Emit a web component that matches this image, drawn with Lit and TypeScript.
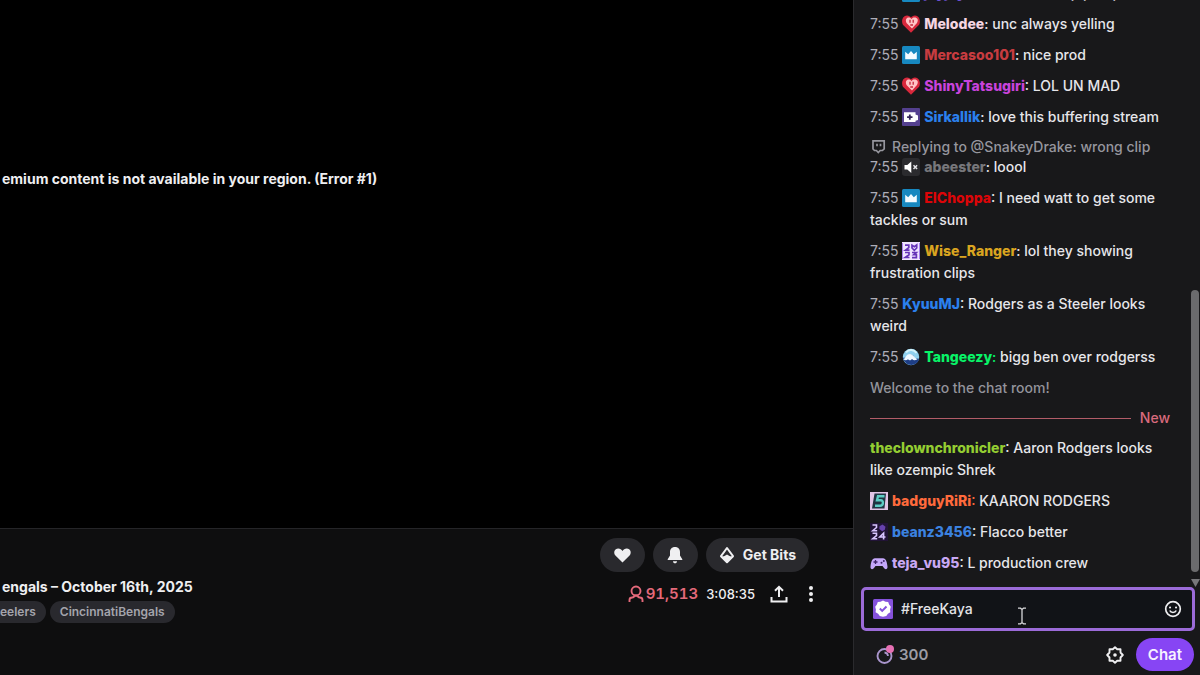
import { LitElement, html, svg, css, nothing, TemplateResult } from "lit";
import { customElement, property } from "lit/decorators.js";

type BadgeName = "heart" | "crown" | "pack" | "muted" | "recap23" | "wave" | "five" | "recap24" | "pad";

interface Message {
  time?: string;
  badge?: BadgeName;
  user: string;
  color: string;
  text: string;
  tint?: boolean;
}

const badges: Record<BadgeName, TemplateResult> = {
  heart: svg`<path d="M9 17.800.900 9.800C-1 6 .6.8 5 .6c2 0 3.200 1 4 2 .8-1 2-2 4-2 4.400.2 6 5.400 4.100 9.200Z" fill="#d8283c"/>
    <path d="M10 13.500 4.500 8C3 5 4.500 2.600 6.600 2.600c1.400 0 2.300.7 2.900 1.600.6-.9 1.500-1.600 2.900-1.600C15.500 2.600 16.800 5 15 8Z" fill="#ffc4c6"/>
    <path d="M8 4.800v3M11.200 4.800v3M8.300 10h2.700" stroke="#c5283c" stroke-width="1.300" fill="none"/>`,
  crown: svg`<rect width="18" height="18" rx="1.500" fill="#1788c0"/>
    <path d="M3.200 5.800 6.200 8.300 9 5l2.800 3.300 3-2.500v7.400H3.200Z" fill="#f4fbff"/>`,
  pack: svg`<rect width="18" height="18" rx="1" fill="#54408f"/>
    <path d="M2 4.200h11.500v2.300l2.500 1v4.400l-2.500.8V14H2Z" fill="#fff"/>
    <path d="M7.800 6.400v5.400M5.100 9.100h5.400" stroke="#322459" stroke-width="1.800"/>`,
  muted: svg`<rect width="18" height="18" rx="3" fill="#2b2b2e"/>
    <path d="M2.500 7v4.500h2.800L9.300 15V3.500L5.300 7Z" fill="#fff"/>
    <path d="m11.500 7.300 3.600 3.800M15.100 7.300l-3.600 3.800" stroke="#e4e4e8" stroke-width="1.500"/>`,
  recap23: svg`<rect width="18" height="18" fill="#f0e4ff"/>
    <path d="M3 3.200h3.800v2.400L3.500 8.200h4M10 3.300l2.300 1.500 2.400-1.800v3l-2.400 2.300L10 6ZM3 10.500h4v2.200L3.200 15.500h4.300M10 10.500h4.300l-2.500 2.200h2.600v3H10" stroke="#6634b8" stroke-width="1.700" fill="none"/>
    <path d="M.5 1v16M17.500 1v16" stroke="#a780ec"/>`,
  wave: svg`<circle cx="9" cy="9" r="8.200" fill="#8fd0ee"/>
    <path d="M1 9.500C3.500 11 5 6.500 8.700 6.500c4 0 2 4.500 8.300 4.300C15.500 19 3 19.500 1 9.500Z" fill="#1e3e86"/>
    <path d="M1.600 11.500C3.500 9.500 4.500 6 8 6c3 0 4 3.500 7.500 5.200-2.500 1.500-4.200 1.200-5.500-.3-1.300 1.800-3 1.500-4 .3-1.200 1.200-2.500 1.500-4.400.3Z" fill="#eef8ff"/>
    <path d="M4 4.500C7 .6 12 1.500 14.500 5" stroke="#d4f3fb" stroke-width="2" fill="none"/>`,
  five: svg`<rect width="18" height="18" fill="#e2c4e6"/><path d="M4.500 1.500h11.500l-1.500 15H2Z" fill="#213443"/>
    <path d="M14.500 4.200H8L7 8.300h3.700c3.300 0 2.800 5.500-.7 5.500H5" stroke="#5dccc4" stroke-width="2.400" fill="none"/>`,
  recap24: svg`<rect width="18" height="18" fill="#211336"/>
    <path d="M2.500 2h4v2.500L2.800 7.700h4.400M2.500 10.200h4v2.500l-3.700 3h4.400M13.600 16.500v-6.300L9.800 14h5.700" stroke="#d8c4ff" stroke-width="1.600" fill="none"/>
    <path d="M9.500 3.200 12.500 1.500l3 2.200-.7 3-2.600 1.500L9.300 6Z" fill="#6642ad"/>`,
  pad: svg`<path d="M5 4.300h8c3 0 4 4 4.500 8.500.2 2.800-2.500 3-3.700 1L12.500 12h-7l-1.300 1.800c-1.200 2-4 1.800-3.700-1C1 8.300 2 4.300 5 4.300Z" fill="#c4a7fa"/>
    <path d="M5.500 6v4M3.500 8h4" stroke="#3f246a" stroke-width="1.300"/><circle cx="11.500" cy="8.800" r="1" fill="#3f246a"/><circle cx="13.800" cy="7" r="1" fill="#3f246a"/>`,
};

@customElement("chat-line")
export class ChatLine extends LitElement {
  @property({ attribute: false }) message!: Message;

  static styles = css`
    :host { display: block; }
    .line { margin: 0; overflow-wrap: anywhere; }
    .time { color: #adadb8; font-weight: 400; }
    .badge { width: 18px; height: 18px; vertical-align: -4px; margin-right: 4px; }
    .user { font-weight: 800; }
  `;

  render() {
    const m = this.message;
    return html`<p class="line">${m.time ? html`<span class="time">${m.time}</span> ` : nothing}${m.badge
      ? html`<svg class="badge" viewBox="0 0 18 18" aria-hidden="true">${badges[m.badge]}</svg>`
      : nothing}<span class="user" style="color:${m.color}">${m.user}</span><span style="color:${m.tint ? m.color : "inherit"}">:</span> ${m.text}</p>`;
  }
}

const earlier: Message[] = [
  { time: "7:55", badge: "crown", user: "jayjay", color: "#6a4fd0", text: "that was a deep pump" },
  { time: "7:55", badge: "heart", user: "Melodee", color: "#f5d5e2", text: "unc always yelling" },
  { time: "7:55", badge: "crown", user: "Mercasoo101", color: "#c83c40", text: "nice prod" },
  { time: "7:55", badge: "heart", user: "ShinyTatsugiri", color: "#c843dc", text: "LOL UN MAD" },
  { time: "7:55", badge: "pack", user: "Sirkallik", color: "#2b80ee", text: "love this buffering stream" },
];
const afterReply: Message[] = [
  { time: "7:55", badge: "crown", user: "ElChoppa", color: "#dc0508", text: "I need watt to get some tackles or sum" },
  { time: "7:55", badge: "recap23", user: "Wise_Ranger", color: "#daa520", text: "lol they showing frustration clips" },
  { time: "7:55", user: "KyuuMJ", color: "#2b80ee", text: "Rodgers as a Steeler looks weird" },
  { time: "7:55", badge: "wave", user: "Tangeezy", color: "#08f468", text: "bigg ben over rodgerss", tint: true },
];
const fresh: Message[] = [
  { user: "theclownchronicler", color: "#94cd32", text: "Aaron Rodgers looks like ozempic Shrek" },
  { badge: "five", user: "badguyRiRi", color: "#ff6a3c", text: "KAARON RODGERS", tint: true },
  { badge: "recap24", user: "beanz3456", color: "#3b82e0", text: "Flacco better" },
  { badge: "pad", user: "teja_vu95", color: "#c9a8f4", text: "L production crew" },
];
const line = (message: Message) => html`<chat-line .message=${message}></chat-line>`;

@customElement("chat-panel")
export class ChatPanel extends LitElement {
  static styles = css`
    :host { display: flex; flex-direction: column; box-sizing: border-box; height: 100%; border-left: 1px solid #2a2a2d; background: #18181a; }
    .history { position: relative; flex: 1; min-height: 0; overflow: hidden; display: flex; flex-direction: column; justify-content: flex-end; }
    .log { display: flex; flex-direction: column; gap: 9px; padding: 0 30px 13px 16px; font-size: 14px; line-height: 22px; font-weight: 500; color: #e6e6ea; }
    .reply-to { display: flex; align-items: center; gap: 6px; height: 19px; color: #96969e; white-space: nowrap; }
    .reply-to svg { width: 16px; height: 16px; }
    .welcome { margin: 0; color: #93939b; }
    .divider { display: flex; align-items: center; gap: 9px; height: 20px; color: #d86a7c; }
    .divider::before { content: ""; flex: 1; height: 1px; background: #b25c68; }
    .track { position: absolute; top: 0; right: 0; bottom: 0; width: 10px; display: flex; flex-direction: column; align-items: center; justify-content: flex-end; gap: 7px; }
    .thumb { width: 8px; height: 48%; border-radius: 4px; background: #6b6b6d; }
    .arrow { width: 9px; height: 8px; }
    .compose { position: relative; display: flex; align-items: center; gap: 8px; margin: 0 5px 0 7px; height: 38px; padding: 0 10px 0 9px; border: 3px solid #9b6bd8; border-radius: 5px; background: #111317; }
    .compose svg { flex: none; }
    .text { flex: 1; min-width: 0; padding: 0; border: 0; outline: 0; background: none; color: #e3e3e7; font: 500 14px/22px Inter, sans-serif; }
    .icon { display: grid; place-items: center; padding: 0; border: 0; background: none; color: #efeff1; }
    .beam { position: absolute; left: 153px; top: 17px; width: 10px; height: 18px; }
    .footer { display: flex; align-items: center; padding: 7px 6px 4px 22px; }
    .points { display: flex; align-items: center; gap: 4px; padding: 0; border: 0; background: none; color: #9c9ca4; font: 600 15px/22px Inter, sans-serif; }
    .settings { margin-left: auto; margin-right: 12px; }
    .send { height: 33px; padding: 0 12px; border: 0; border-radius: 17px; background: #8745f4; color: #f6f1ff; font: 600 15px/22px Inter, sans-serif; }
  `;

  render() {
    return html`
      <div class="history">
        <div class="log">
          ${earlier.map(line)}
          <div>
            <div class="reply-to">
              <svg viewBox="0 0 16 16" fill="none" stroke="currentColor" stroke-width="1.700" aria-hidden="true"><path d="M3 1.800h11.200v8l-1.800 1.700h-2.200l-1.900 2-1.900-2H4.500L3 10Z"/><path d="M7 4.800v2.400M10.500 4.800v2.400"/></svg>
              Replying to @SnakeyDrake: wrong clip
            </div>
            ${line({ time: "7:55", badge: "muted", user: "abeester", color: "#77777b", text: "loool" })}
          </div>
          ${afterReply.map(line)}
          <p class="welcome">Welcome to the chat room!</p>
          <div class="divider">New</div>
          ${fresh.map(line)}
        </div>
        <div class="track" aria-hidden="true">
          <div class="thumb"></div>
          <svg class="arrow" viewBox="0 0 9 8"><path d="M0 0h9L4.500 8Z" fill="#77777a"/></svg>
        </div>
      </div>
      <div class="compose">
        <svg width="20" height="20" viewBox="0 0 20 20" aria-hidden="true"><rect width="20" height="20" rx="1.500" fill="#8552dc"/><path d="m10 1.500 2.500 1.300 2.700.2.900 2.600 1.700 2.200-.7 2.700.2 2.800-2.400 1.500-1.600 2.200-3.300.8-3.200-.8-1.700-2.200-2.500-1.500.3-2.800-.7-2.700 1.700-2.200.9-2.600 2.700-.2Z" fill="#fff"/><path d="m6.800 9.500 2.400 2.400 4.300-4.400" fill="none" stroke="#8552dc" stroke-width="2"/></svg>
        <input class="text" type="text" aria-label="Send a message" .value=${"#FreeKaya"} />
        <button class="icon" type="button" aria-label="Emote picker">
          <svg width="18" height="18" viewBox="0 0 18 18" fill="none" stroke="currentColor"><circle cx="9" cy="9" r="7.300" stroke-width="1.700"/><path d="M6 7.400h.1M12 7.400h.1" stroke-width="2" stroke-linecap="round"/><path d="M5.800 10.500c1 2.600 5.400 2.600 6.400 0" stroke-width="1.600"/></svg>
        </button>
        <svg class="beam" viewBox="0 0 10 18" fill="none" stroke="#d8d8da" stroke-width="1.300" aria-hidden="true"><path d="M1 1.200h2.500L5 2.500l1.500-1.300H9M5 2.500v13M1 16.800h2.500L5 15.500l1.500 1.300H9"/></svg>
      </div>
      <div class="footer">
        <button class="points" type="button" aria-label="300 channel points">
          <svg width="19" height="20" viewBox="0 0 19 20" fill="none" aria-hidden="true"><circle cx="8.500" cy="11" r="7" stroke="#a995cc" stroke-width="1.900"/><path d="M8.500 7.500c2.200.2 3.300 1.500 3.500 3.500" stroke="#a995cc" stroke-width="1.800"/><circle cx="14" cy="4" r="4" fill="#e670b4"/></svg>
          300
        </button>
        <button class="icon settings" type="button" aria-label="Chat settings">
          <svg width="18" height="18" viewBox="0 0 18 18" fill="none" stroke="currentColor" stroke-width="1.900" stroke-linejoin="round"><path d="m9 1.200 2.200 2h3.300v3.300L16.800 9l-2.300 2.500v3.300h-3.300L9 16.800l-2.200-2H3.500v-3.300L1.200 9l2.300-2.500V3.200h3.300Z"/><circle cx="9" cy="9" r="1.800" fill="currentColor" stroke="none"/></svg>
        </button>
        <button class="send" type="button">Chat</button>
      </div>
    `;
  }
}

@customElement("app-root")
export class AppRoot extends LitElement {
  static styles = css`
    :host { display: flex; height: 100vh; overflow: hidden; background: #0e0e10; color: #efeff1; font-family: Inter, "Liberation Sans", sans-serif; }
    .stage { flex: 1; min-width: 0; display: flex; flex-direction: column; }
    .player { flex: 1; padding-top: 168px; background: #000; }
    .error { margin: 0; padding-left: 2px; font-size: 14px; line-height: 22px; font-weight: 700; white-space: nowrap; }
    .info { display: flex; justify-content: space-between; height: 146px; border-top: 1px solid #252528; background: #0e0e0f; }
    .about { display: flex; flex-direction: column; gap: 4px; padding-top: 48px; }
    .title { margin: 0; padding-left: 2px; font-size: 14px; line-height: 20px; font-weight: 700; white-space: nowrap; }
    .tags { display: flex; gap: 4px; }
    .tag { padding: 0 10px; border-radius: 11px; background: #29292e; color: #a4a4ac; font-size: 12px; line-height: 22px; font-weight: 600; text-decoration: none; }
    .tag:first-child { padding-left: 0; border-radius: 0 11px 11px 0; }
    .side { display: flex; flex-direction: column; gap: 11px; padding: 9px 32px 0 0; }
    .row { display: flex; align-items: center; justify-content: flex-end; gap: 8px; }
    .actions { padding-right: 12px; }
    .pill { display: flex; align-items: center; justify-content: center; gap: 8px; min-width: 45px; height: 34px; padding: 0 13px; border: 0; border-radius: 17px; background: #29292d; color: #efeff1; font: 700 14px/20px Inter, sans-serif; }
    .viewers { display: flex; align-items: center; gap: 2px; color: #e4697a; font-size: 15px; line-height: 22px; font-weight: 600; font-variant-numeric: tabular-nums; }
    .uptime { font-size: 13px; line-height: 22px; font-weight: 500; }
    .icon { display: grid; place-items: center; width: 20px; height: 20px; padding: 0; border: 0; background: none; color: #efeff1; }
    .tools { display: flex; gap: 12px; padding-left: 6px; }
    .chat { width: 347px; flex: none; }
  `;

  render() {
    return html`
      <main class="stage">
        <section class="player"><p class="error">emium content is not available in your region. (Error #1)</p></section>
        <section class="info">
          <div class="about">
            <h1 class="title">engals – October 16th, 2025</h1>
            <div class="tags"><a class="tag" href="#">eelers</a><a class="tag" href="#">CincinnatiBengals</a></div>
          </div>
          <div class="side">
            <div class="row actions">
              <button class="pill" type="button" aria-label="Follow"><svg width="19" height="17" viewBox="0 0 20 18"><path d="M10 16.500 2.500 9C0 6 1.500 1.500 5.500 1.500c2 0 3.500 1 4.500 2.700 1-1.700 2.500-2.700 4.500-2.700 4 0 5.500 4.500 3 7.500Z" fill="currentColor"/></svg></button>
              <button class="pill" type="button" aria-label="Notifications"><svg width="18" height="18" viewBox="0 0 18 18" fill="currentColor"><path d="M9 1c3.300 0 5 2.300 5 5v3.500l2.300 3.700v.8H1.700v-.8L4 9.500V6c0-2.700 1.700-5 5-5ZM7 15.300h4C11 18 7 18 7 15.300Z"/></svg></button>
              <button class="pill" type="button"><svg width="16" height="18" viewBox="0 0 16 18"><path d="M8 2 2 10.200l6 6 6-6Z" fill="none" stroke="currentColor" stroke-width="2" stroke-linejoin="round"/><path d="m2 11 3.500-1L8 8.500l2.500 1.500 3.500 1-6 5.500Z" fill="currentColor"/></svg>Get Bits</button>
            </div>
            <div class="row">
              <span class="viewers"><svg width="16" height="18" viewBox="0 0 16 18" fill="none" stroke="currentColor" stroke-width="1.900" aria-hidden="true"><circle cx="8" cy="6" r="4.500"/><path d="M1.500 17v-2c0-1.700 1-2.500 2.700-2.500 1.800 0 2-2 3.800-2s2 2 3.800 2c1.700 0 2.700.8 2.700 2.500v2"/></svg>91,513</span>
              <span class="uptime">3:08:35</span>
              <span class="tools">
                <button class="icon" type="button" aria-label="Share"><svg width="18" height="18" viewBox="0 0 18 18" fill="none" stroke="currentColor" stroke-width="2"><path d="M9 12V2M5 5.800 9 1.900l4 3.900M1.500 12v4.500h15V12"/></svg></button>
                <button class="icon" type="button" aria-label="More options"><svg width="18" height="18" viewBox="0 0 18 18" fill="currentColor"><circle cx="9" cy="3" r="2"/><circle cx="9" cy="9" r="2"/><circle cx="9" cy="15" r="2"/></svg></button>
              </span>
            </div>
          </div>
        </section>
      </main>
      <chat-panel class="chat"></chat-panel>
    `;
  }
}
